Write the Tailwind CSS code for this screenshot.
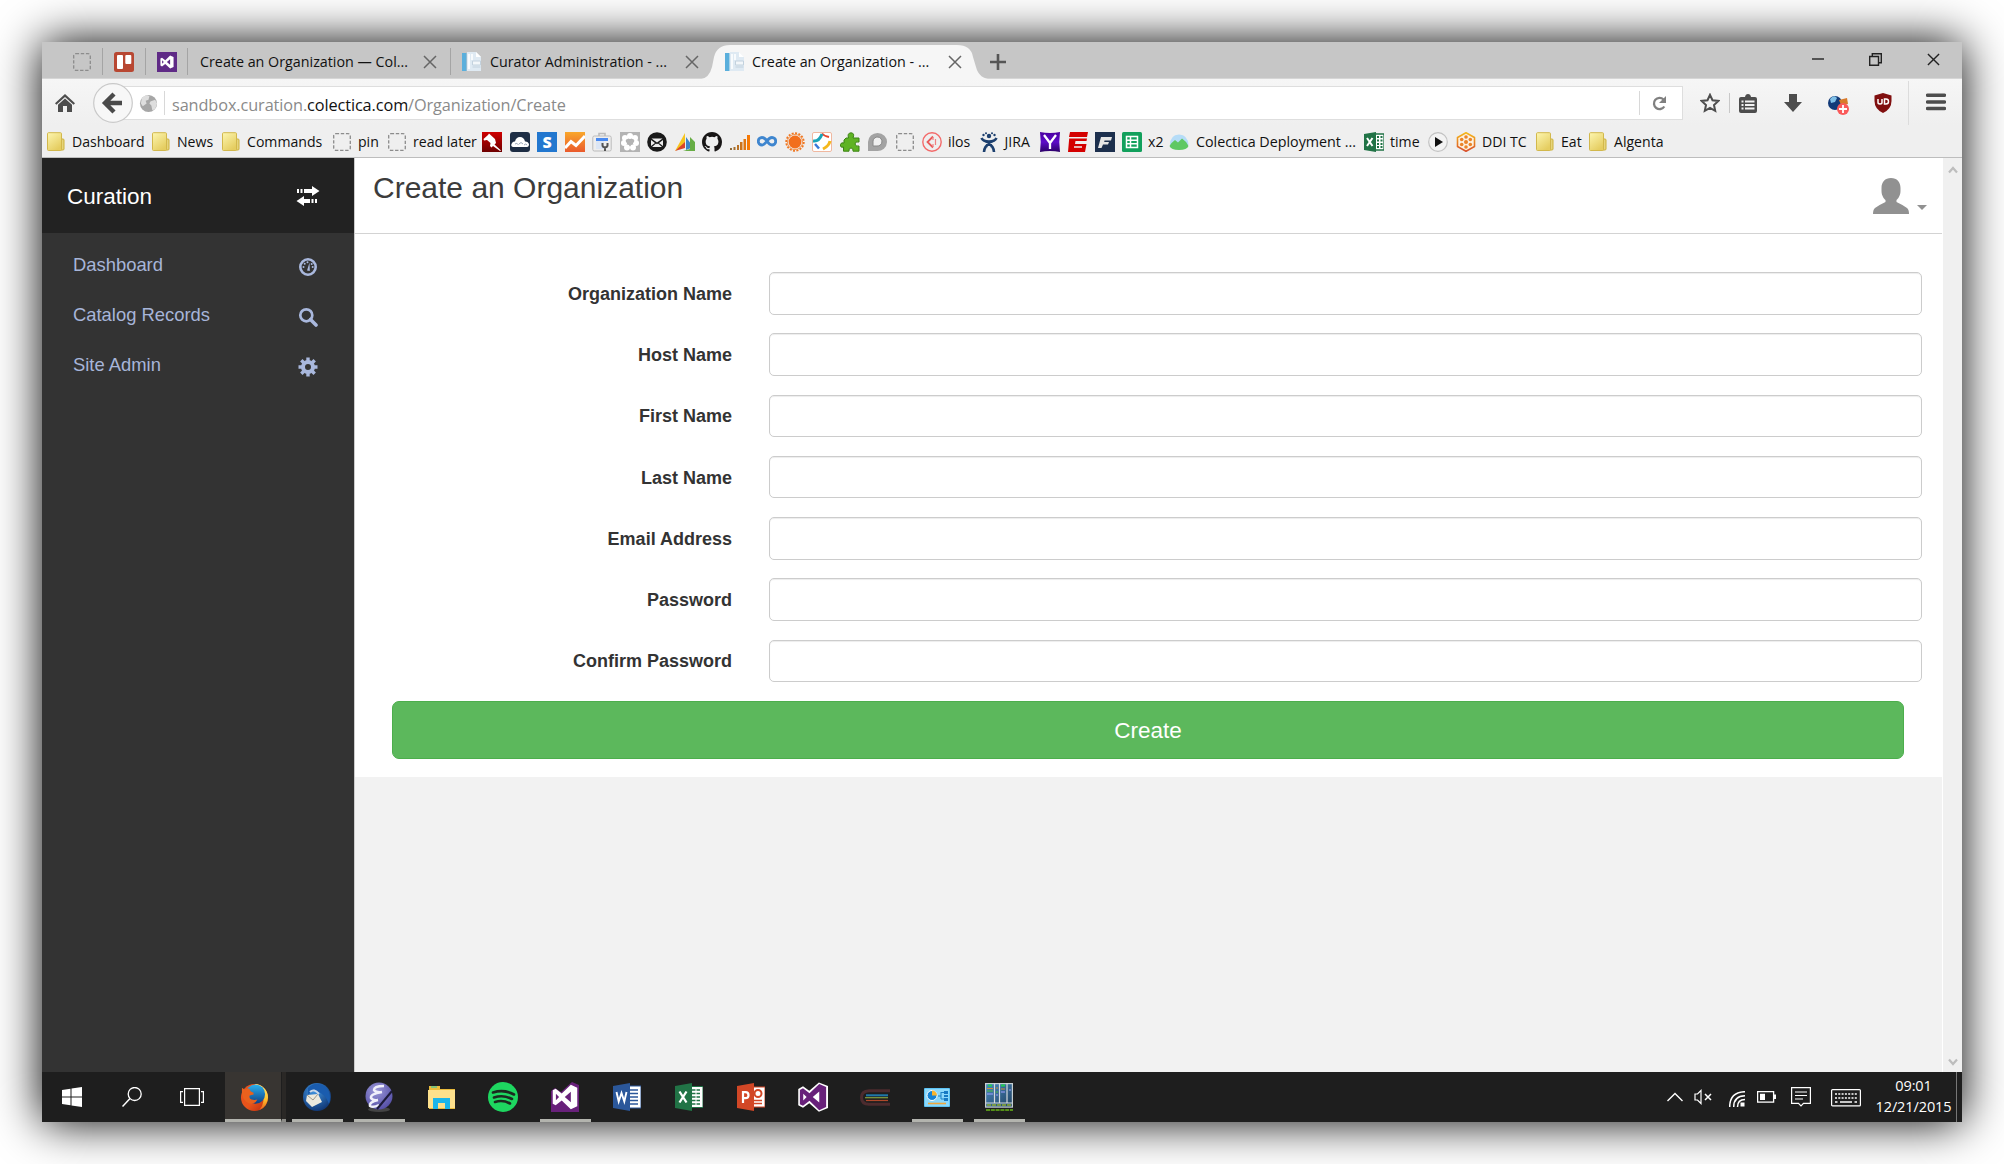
<!DOCTYPE html>
<html lang="en">
<head>
<meta charset="utf-8">
<title>Create an Organization</title>
<script src="https://cdn.jsdelivr.net/npm/@tailwindcss/browser@4"></script>
</head>
<body class="bg-white w-[2004px] h-[1164px] overflow-hidden p-[42px] font-['Open_Sans',sans-serif]">
<svg class="absolute w-0 h-0">
  <defs>
    <linearGradient id="fg" x1="0" y1="0" x2="0.6" y2="1"><stop offset="0" stop-color="#fdf6b0"/><stop offset="1" stop-color="#e5cd60"/></linearGradient>
    <linearGradient id="pinr" x1="0" y1="0" x2="0" y2="1"><stop offset="0" stop-color="#cf0000"/><stop offset="1" stop-color="#6e0000"/></linearGradient>
    <linearGradient id="ora" x1="0" y1="0" x2="0" y2="1"><stop offset="0" stop-color="#f9a72b"/><stop offset="1" stop-color="#ea5a2c"/></linearGradient>
    <linearGradient id="yah" x1="0" y1="0" x2="0" y2="1"><stop offset="0" stop-color="#4a00a0"/><stop offset=".5" stop-color="#5d0cc8"/><stop offset="1" stop-color="#2b0066"/></linearGradient>
    <linearGradient id="bars" x1="0" x2="1"><stop offset="0" stop-color="#8a6a3a"/><stop offset="1" stop-color="#ff7a00"/></linearGradient>
    <linearGradient id="hex" x1="0" y1="0" x2="0" y2="1"><stop offset="0" stop-color="#f5b81c"/><stop offset="1" stop-color="#d8502c"/></linearGradient>
    <linearGradient id="ffo" x1="0" y1="0" x2="1" y2="1"><stop offset="0" stop-color="#e8501c"/><stop offset=".55" stop-color="#e8541b"/><stop offset="1" stop-color="#b5260c"/></linearGradient>
    <linearGradient id="ffb" x1="0" y1="0" x2="0" y2="1"><stop offset="0" stop-color="#2cb2ee"/><stop offset="1" stop-color="#0c3f86"/></linearGradient>
    <linearGradient id="ffy" x1="0" y1="0" x2="0" y2="1"><stop offset="0" stop-color="#fff27a"/><stop offset=".6" stop-color="#fdc22c"/><stop offset="1" stop-color="#ea5b1a"/></linearGradient>
    <radialGradient id="tb" cx=".4" cy=".3" r=".7"><stop offset="0" stop-color="#3f93e0"/><stop offset="1" stop-color="#123a78"/></radialGradient>
    <radialGradient id="em" cx=".4" cy=".3" r=".7"><stop offset="0" stop-color="#9b98d8"/><stop offset="1" stop-color="#5751a8"/></radialGradient>
    <linearGradient id="sky" x1="0" y1="0" x2="1" y2="1"><stop offset="0" stop-color="#4a8ac0"/><stop offset="1" stop-color="#20405f"/></linearGradient>
    <symbol id="folder" viewBox="0 0 20 20"><path d="M14 7h3q1 0 1 1v9q0 1-1 1h-3z" fill="#e6d47c" stroke="#cdb23a"/><rect x="1.5" y=".7" width="14" height="17.8" rx="1" fill="url(#fg)" stroke="#d2b84c"/></symbol>
    <symbol id="dash" viewBox="0 0 20 20"><rect x="1.7" y="1.7" width="16.6" height="16.6" rx="2" fill="none" stroke="#8c8c8c" stroke-width="1.3" stroke-dasharray="3.4 1.7"/></symbol>
    <symbol id="x" viewBox="0 0 14 14"><path d="M1 1L13 13M13 1L1 13" stroke="currentColor" stroke-width="1.5" fill="none"/></symbol>
    <symbol id="doc" viewBox="0 0 20 20"><path d="M0 1h4.500v18H0z" fill="#5aafdc"/><path d="M5 0h9l5 5v14H5z" fill="#dfeaf3"/><path d="M7 2v15M10 2v6" stroke="#f8fbfd" stroke-width="2"/><path d="M10.500 9h8v4h-8zM10.500 15h8" stroke="#c3d2de" stroke-width="1" fill="#f3f7fa"/><path d="M14 0l5 5h-5z" fill="#fff"/></symbol>
    <symbol id="vs" viewBox="0 0 24 24"><path fill-rule="evenodd" d="M17 1.5L22.5 4V20L17 22.5L9.2 15L4 19L1.5 17.7V6.3L4 5L9.2 9ZM17 7.6L11.8 12L17 16.4ZM4.2 9.3V14.7L6.9 12Z"/></symbol>
    <symbol id="globe" viewBox="0 0 20 20"><circle cx="10" cy="10" r="9" fill="#a6a6a6"/><path d="M3 4q4-4 8-2l-1 4-3 1 1 3-4 3-2-3zM12 8l5-2 2 4-2 6-3 1-1-5-2-2z" fill="#dedede"/></symbol>
  </defs>
</svg>

<div class="w-[1920px] h-[1080px] flex flex-col shadow-[0_0_44px_#000] bg-[#efefef]">

  <!-- Tab strip -->
  <div class="h-[37px] shrink-0 bg-[#c6c6c6] flex items-center text-[14.300px] text-[#111] whitespace-nowrap border-b border-[#d6d6d6]">
    <div class="w-[60px] pl-[30px] shrink-0 mt-[3px]"><svg class="size-5"><use href="#dash"/></svg></div>
    <div class="w-[43px] h-[27px] mt-[3px] border-l border-[#a4a4a4] shrink-0 flex items-center pl-[11px]"><svg class="size-5" viewBox="0 0 20 20"><rect width="20" height="20" rx="2.5" fill="#b84732"/><rect x="3" y="3" width="6" height="14" rx="1" fill="#fff"/><rect x="11.3" y="3" width="6" height="9" rx="1" fill="#fff"/></svg></div>
    <div class="w-[42px] h-[27px] mt-[3px] border-l border-[#a4a4a4] shrink-0 flex items-center pl-[11px]"><svg class="size-5" viewBox="0 0 20 20"><rect width="20" height="20" fill="#5f2a86"/><use href="#vs" x="2.5" y="2.5" width="15" height="15" fill="#fff"/></svg></div>
    <div class="w-[263px] h-[27px] mt-[3px] border-l border-[#a4a4a4] shrink-0 flex items-center pl-[12px]"><span class="w-[223px]">Create an Organization — Col...</span><svg class="size-[14px] text-[#666]"><use href="#x"/></svg></div>
    <div class="w-[250px] h-[27px] mt-[3px] border-l border-[#a4a4a4] shrink-0 flex items-center pl-[11px]"><svg class="size-5 mr-[8px]"><use href="#doc"/></svg><span class="w-[195px]">Curator Administration - ...</span><svg class="size-[14px] text-[#666]"><use href="#x"/></svg></div>
    <div class="w-[292px] h-[37px] shrink-0 relative flex items-center pl-[25px] pt-[3px]">
      <svg class="absolute left-0 top-[1px] w-[292px] h-[38px]" viewBox="0 0 292 38"><path d="M-1 36.500Q9 36 12 24L14 14Q17 2 30 2H257Q271 2 273 14L276 24Q279 36 292 36.500V38H0Z" fill="#f6f6f6"/></svg>
      <svg class="size-5 mr-[7px] relative"><use href="#doc"/></svg><span class="w-[196px] relative">Create an Organization - ...</span><svg class="size-[14px] text-[#666] relative"><use href="#x"/></svg>
    </div>
    <svg class="size-4 shrink-0 -ml-[2px] mt-[3px]" viewBox="0 0 16 16"><path d="M8 0V16M0 8H16" stroke="#555" stroke-width="2.6"/></svg>
    <div class="ml-auto flex items-center pr-[22px] pb-[2px] text-[#222]">
      <svg class="w-3 h-3 mr-[45px]" viewBox="0 0 12 12"><path d="M0 6H12" stroke="#222" stroke-width="1.4"/></svg>
      <svg class="w-[13px] h-[13px] mr-[45px]" viewBox="0 0 13 13"><path d="M.7 3.5H9.5V12.3H.7ZM3.3 3.3V.7H12.3V9.7H9.7" fill="none" stroke="#222" stroke-width="1.4"/></svg>
      <svg class="size-[13px]"><use href="#x" width="13" height="13"/></svg>
    </div>
  </div>

  <!-- Navigation toolbar -->
  <div class="h-[46px] pt-[2px] shrink-0 bg-linear-to-b from-[#f6f6f6] to-[#efefef] flex items-center relative">
    <svg class="w-5 h-[18px] ml-[13px] shrink-0" viewBox="0 0 20 18"><path d="M10 0L20 9.3L18.6 10.7L10 3L1.4 10.7L0 9.3Z" fill="#4d4d4d"/><path d="M10 4.5L17 10.8V18H12V12H8V18H3V10.8Z" fill="#4d4d4d"/></svg>
    <svg class="size-[40px] ml-[18px] shrink-0 z-10 relative" viewBox="0 0 40 40"><circle cx="20" cy="20" r="19.3" fill="#f7f7f7" stroke="#c9c9c9" stroke-width="1.2"/><path d="M21 11L12 20L21 29M13 20H29" fill="none" stroke="#4a4a4a" stroke-width="4.4"/></svg>
    <div class="-ml-[14px] w-[1564px] h-[34px] shrink-0 bg-white border border-[#dedede] flex items-center">
      <svg class="size-[19px] ml-[19px] mr-[6px] shrink-0"><use href="#globe"/></svg>
      <div class="w-px h-6 bg-[#d8d8d8] mr-[7px]"></div>
      <span class="text-[16.300px] text-[#8a8a8a] tracking-[-0.1px] mt-[4px] whitespace-nowrap">sandbox.curation.<span class="text-[#111]">colectica.com</span>/Organization/Create</span>
      <div class="w-px h-6 bg-[#d8d8d8] ml-auto mr-[12px]"></div>
      <svg class="size-[15px] mr-[15px]" viewBox="0 0 15 15"><path d="M12.3 10.5A5.6 5.6 0 1 1 11.5 3.5" fill="none" stroke="#808080" stroke-width="2.3"/><path d="M14 0V7H7Z" fill="#808080"/></svg>
    </div>
    <svg class="w-5 h-5 ml-[17px] shrink-0" viewBox="0 0 20 20"><path d="M10 1.8L12.5 7.2L18.3 7.9L14 12L15.2 17.8L10 14.9L4.8 17.8L6 12L1.7 7.9L7.5 7.2Z" fill="none" stroke="#4d4d4d" stroke-width="2"/></svg>
    <div class="w-px h-5 bg-[#c8c8c8] ml-[9px] mr-[9px]"></div>
    <svg class="w-[18px] h-[19px] shrink-0" viewBox="0 0 18 19"><path d="M2 3H6Q6.500 0 9 0Q11.500 0 12 3H16Q18 3 18 5V17Q18 19 16 19H2Q0 19 0 17V5Q0 3 2 3Z" fill="#4d4d4d"/><path d="M2.500 6.500H4.500V8.500H2.500ZM6 6.500H15.500V8.500H6ZM2.500 10H4.500V12H2.500ZM6 10H15.500V12H6ZM2.500 13.500H4.500V15.500H2.500ZM6 13.500H15.500V15.500H6Z" fill="#f2f2f2"/></svg>
    <svg class="w-[18px] h-[18px] ml-[27px] shrink-0" viewBox="0 0 18 18"><path d="M5 0H13V8H18L9 18L0 8H5Z" fill="#4d4d4d"/></svg>
    <svg class="w-[21px] h-[20px] ml-[26px] mt-[3px] shrink-0" viewBox="0 0 21 20"><circle cx="7" cy="8" r="7" fill="#123a78"/><path d="M2 4Q6-1 9 3L7 7L3 8Z" fill="#7fc0e8"/><path d="M11 5L19 3L20 9L13 10Z" fill="#d87a2a"/><circle cx="15" cy="14" r="6" fill="#fa5a5a"/><path d="M15 10V18M11 14H19" stroke="#fff" stroke-width="1.800"/></svg>
    <svg class="w-[18px] h-[20px] ml-[25px] shrink-0" viewBox="0 0 18 20"><path d="M9 0L17.500 2.500V8Q17.500 16 9 20Q.5 16 .5 8V2.500Z" fill="#800f0f"/><path d="M4 6V9.500Q4 11 6 11Q8 11 8 9.500V6M10.500 6V11H12Q14.500 11 14.500 8.500Q14.500 6 12 6Z" fill="none" stroke="#fff" stroke-width="1.500"/></svg>
    <div class="w-px h-[44px] bg-[#dcdcdc] ml-[16px] mr-[17px]"></div>
    <svg class="w-5 h-[18px] -mt-[2px] shrink-0" viewBox="0 0 20 18"><path d="M1.500 2.200H18.500M1.500 9H18.500M1.500 15.500H18.500" stroke="#4d4d4d" stroke-width="3.400" stroke-linecap="round"/></svg>
  </div>

  <!-- Bookmarks toolbar -->
  <div class="h-[33px] shrink-0 bg-[#efefef] border-b border-[#bdbdbd] flex items-center pl-[4px] pt-[2px] text-[14.100px] text-[#111] whitespace-nowrap [&>div]:flex [&>div]:items-center [&>div]:gap-[6px] [&>div]:shrink-0 [&_svg]:size-5 [&_svg]:shrink-0">
    <div class="w-[105px]"><svg><use href="#folder"/></svg>Dashboard</div>
    <div class="w-[70px]"><svg><use href="#folder"/></svg>News</div>
    <div class="w-[111px]"><svg><use href="#folder"/></svg>Commands</div>
    <div class="w-[55px]"><svg><use href="#dash"/></svg>pin</div>
    <div class="w-[95px]"><svg><use href="#dash"/></svg>read later</div>
    <div class="w-[27.500px]"><svg viewBox="0 0 20 20"><rect width="20" height="20" fill="url(#pinr)"/><path d="M7 1.500L13 7L14 11L12.500 12.500L19 18.500L18 19L11 14L9.500 15.500L8 14L8.500 11L5 8L2 8.500L1.500 7L6 3Z" fill="#fff"/></svg></div>
    <div class="w-[27.500px]"><svg viewBox="0 0 20 20"><rect width="20" height="20" rx="3" fill="#1d2d44"/><path d="M3 15Q0 14 2 11Q3 9 5 9.500Q6 5 10 5Q14 5 15 9.500Q18 9 19 12Q19 15 17 15Z" fill="#fff"/><path d="M5 12q2-2 3.500 1M9 12q2-3 4 0M14 13q2-2 3 0" stroke="#9aa6b8" fill="none"/></svg></div>
    <div class="w-[27.500px]"><svg viewBox="0 0 20 20"><rect width="20" height="20" fill="#2277cf"/><text x="10" y="15.500" text-anchor="middle" font-family="Open Sans" font-weight="800" font-size="16" fill="#fff">S</text></svg></div>
    <div class="w-[27.500px]"><svg viewBox="0 0 20 20"><rect width="20" height="20" fill="url(#ora)"/><path d="M0 16L6 9.500L11 13.500L20 4" fill="none" stroke="#fff" stroke-width="3"/></svg></div>
    <div class="w-[27.500px]"><svg viewBox="0 0 20 20"><path d="M7 4V1.500H13V4" fill="none" stroke="#bbb" stroke-width="1.500"/><rect x=".8" y="4" width="18.400" height="15" rx="1.500" fill="#eee" stroke="#bbb"/><rect x="4" y="6" width="12" height="3" fill="#4a8af0"/><rect x="4" y="9" width="8" height="8" fill="#dce6f5"/><path d="M10.500 11V13.500Q10.500 15 13 15.500V19M15.500 11V13.500Q15.500 15 13 15.500" stroke="#555" stroke-width="2" fill="none"/></svg></div>
    <div class="w-[27.500px]"><svg viewBox="0 0 20 20"><rect width="20" height="20" fill="#b3b3b3"/><g fill="#fff"><circle cx="10" cy="4" r="3"/><circle cx="15" cy="6" r="3"/><circle cx="16" cy="11" r="3"/><circle cx="13" cy="15.500" r="3"/><circle cx="7" cy="15.500" r="3"/><circle cx="4" cy="11" r="3"/><circle cx="5" cy="6" r="3"/></g><path d="M10 14L6 10Q5 7 8 7L10 8.500L12 7Q15 7 14 10Z" fill="#b3b3b3"/></svg></div>
    <div class="w-[27.500px]"><svg viewBox="0 0 20 20"><circle cx="10" cy="10" r="9.800" fill="#1a1a1a"/><path d="M4.500 6.500H15.500L10 10.500ZM4 8L8 11L4 14ZM16 8L12 11L16 14ZM5 15L9 11.500L10 12.300L11 11.500L15 15Z" fill="#eee"/></svg></div>
    <div class="w-[27.500px]"><svg viewBox="0 0 20 20"><path d="M0 19L10 1V13Z" fill="#f7c51e"/><path d="M0 19L10 10V16Z" fill="#d9452c"/><path d="M11 18V5L16 12V16Z" fill="#3d86c6"/><path d="M15 17V5L20 10V19H8Z" fill="#67ad45"/></svg></div>
    <div class="w-[27.500px]"><svg viewBox="0 0 16 16"><path fill="#181616" d="M8 0C3.580 0 0 3.580 0 8c0 3.540 2.290 6.530 5.470 7.590.4.070.550-.170.550-.380 0-.190-.010-.820-.010-1.490-2.010.370-2.530-.490-2.690-.940-.090-.230-.480-.940-.820-1.130-.280-.150-.680-.520-.010-.530.630-.010 1.080.580 1.230.820.720 1.210 1.870.870 2.330.660.070-.520.280-.870.510-1.070-1.780-.200-3.640-.890-3.640-3.950 0-.870.310-1.590.820-2.150-.080-.200-.360-1.020.080-2.120 0 0 .670-.210 2.200.820a7.600 7.600 0 0 1 4 0c1.530-1.040 2.200-.820 2.200-.820.440 1.100.160 1.920.080 2.120.510.560.820 1.270.820 2.150 0 3.070-1.870 3.750-3.650 3.950.290.250.540.730.540 1.480 0 1.070-.010 1.930-.010 2.200 0 .210.150.460.550.380A8.010 8.010 0 0 0 16 8c0-4.420-3.580-8-8-8z"/></svg></div>
    <div class="w-[27.500px]"><svg viewBox="0 0 20 20"><path d="M0 16h2v2H0zM3.500 15h2v3h-2zM7 13h2v5H7zM10 10h2.500v8H10zM13.500 7H16v11h-2.500zM17 3h3v15h-3z" fill="url(#bars)"/></svg></div>
    <div class="w-[27.500px]"><svg viewBox="0 0 20 20"><path d="M10 9Q7.500 5.500 5 5.500A3.700 3.700 0 0 0 5 13Q7 13 10 9Q12.500 5.500 15 5.500A3.700 3.700 0 0 1 15 13Q12.500 13 10 9Z" fill="none" stroke="#3f86cf" stroke-width="2.800"/></svg></div>
    <div class="w-[27.500px]"><svg viewBox="0 0 20 20"><circle cx="10" cy="10" r="8.700" fill="none" stroke="#ef7722" stroke-width="2" stroke-dasharray="2 1.400"/><circle cx="10" cy="10" r="7.600" fill="none" stroke="#f39a58"/><circle cx="10" cy="10" r="6.400" fill="#f26f1d"/></svg></div>
    <div class="w-[27.500px]"><svg viewBox="0 0 20 20"><rect x=".5" y=".5" width="19" height="19" rx="1.500" fill="#fff" stroke="#f0b8a0"/><path d="M10 1.500Q12 4 17 5" stroke="#e8452c" stroke-width="2" fill="none"/><path d="M1 9Q7 10 10 2" stroke="#1aa4b8" stroke-width="3" fill="none"/><path d="M18 9Q17 14 11 17" stroke="#f5b81c" stroke-width="3" fill="none"/><path d="M3 12L7 16.500" stroke="#3878d8" stroke-width="2.500"/></svg></div>
    <div class="w-[27.500px]"><svg viewBox="0 0 20 20"><path d="M6 6H8.500Q7 1 11 .8Q15 1 13 6H19V10Q15 9 15 12Q15.500 15 19 14V19.200H13Q13.500 16 11 16Q8.500 16 9 19.200H3.500V15Q0 16 .5 12.500Q1 10 4 11V8Z" fill="#5fb324" stroke="#3c8414"/></svg></div>
    <div class="w-[27.500px]"><svg viewBox="0 0 20 20"><path d="M1 19V10A9.500 9 0 1 1 10 19Z" fill="#a3a3a3"/><path d="M6 14V9A4.500 4.500 0 1 1 10 14Z" fill="#efefef" stroke="#888"/></svg></div>
    <div class="w-[27.500px]"><svg><use href="#dash"/></svg></div>
    <div class="w-[56.500px]"><svg viewBox="0 0 20 20"><circle cx="10" cy="10" r="9.200" fill="none" stroke="#f36a6a" stroke-width="1.400"/><path d="M11 4.500L5.500 10L11 15.500" fill="none" stroke="#e85a5a" stroke-width="1.800"/><path d="M11 5V8M11 12V15M13.500 7V13" fill="none" stroke="#f08080" stroke-width="1.200"/></svg>ilos</div>
    <div class="w-[61.500px]"><svg viewBox="0 0 20 20"><g fill="#1c3f6e"><circle cx="10" cy="4" r="2.200"/><circle cx="4.500" cy="3" r="1.200"/><circle cx="15.500" cy="3" r="1.200"/><circle cx="7" cy="1.300" r="1"/><circle cx="13" cy="1.300" r="1"/></g><path d="M2.500 6Q4 9.500 10 9.500Q16 9.500 17.500 6M5 20Q5.500 14 10 12Q14.500 14 15 20M5.500 9Q11 10 13 15M14.500 9Q9 10 7 15" fill="none" stroke="#1c3f6e" stroke-width="2.600"/></svg>JIRA</div>
    <div class="w-[27.500px]"><svg viewBox="0 0 20 20"><path d="M0 0Q10 2 20 0Q18.500 10 20 20Q10 18 0 20Q1.500 10 0 0Z" fill="url(#yah)"/><path d="M4 3L10 11L16 3M10 11V17" stroke="#fff" stroke-width="2.300" fill="none"/></svg></div>
    <div class="w-[27.500px]"><svg viewBox="0 0 20 20"><path d="M2 0H20L19 5H1ZM1.200 6.500H19L18.500 9H7.500L7 12H18.500L17 20H0Z" fill="#d40000"/><path d="M6 15H14" stroke="#efefef" stroke-width="1.500"/></svg></div>
    <div class="w-[27px]"><svg viewBox="0 0 20 20"><rect width="20" height="20" fill="#1c2f4d"/><path d="M6 5H17L16 8.500H9.500L9.200 10H14L13 12.500H8L6.500 16H3Z" fill="#e6e6e6"/></svg></div>
    <div class="w-[47px]"><svg viewBox="0 0 20 20"><rect width="20" height="20" rx="1.500" fill="#12a05c"/><path d="M4.500 4.500H15.500V15.500H4.500ZM4.500 8.200H15.500M4.500 11.800H15.500M8.500 4.500V15.500" fill="none" stroke="#fff" stroke-width="1.500"/></svg>x2</div>
    <div class="w-[195px]"><svg viewBox="0 0 20 20"><path d="M1 13Q1 3 10 2.500Q19 3 19.500 13Z" fill="#b5dcf7"/><path d="M.5 14Q3 10 6 8L9 10.500L13 6.500Q17 9 19.500 14Q18 18 10 18Q2 18 .5 14Z" fill="#5fc863"/></svg><span class="text-[14.300px] ml-px">Colectica Deployment ...</span></div>
    <div class="w-[64px]"><svg viewBox="0 0 20 20"><path d="M11 2H20V18H11Z" fill="#fff" stroke="#217346" stroke-width="1.300"/><path d="M13 5h2M16.500 5h2M13 8.500h2M16.500 8.500h2M13 12h2M16.500 12h2M13 15h2M16.500 15h2" stroke="#217346" stroke-width="2"/><path d="M0 2L12 0V20L0 18Z" fill="#217346"/><path d="M3 6L8.500 14M8.500 6L3 14" stroke="#fff" stroke-width="2"/></svg>time</div>
    <div class="w-[28px]"><svg viewBox="0 0 20 20"><circle cx="10" cy="10" r="9.300" fill="#f3f3f3" stroke="#c2c2c2" stroke-width="1.200"/><path d="M7 5V15L15 10Z" fill="#111"/></svg></div>
    <div class="w-[79px]"><svg viewBox="0 0 20 20"><path d="M10 .8L18.500 5.500V14.500L10 19.200L1.500 14.500V5.500Z" fill="#fdf1e0" stroke="url(#hex)" stroke-width="1.600" stroke-linejoin="round"/><g fill="#ea8428"><circle cx="10" cy="10" r="2"/><circle cx="10" cy="5" r="1.800"/><circle cx="10" cy="15" r="1.800"/><circle cx="5.700" cy="7.500" r="1.800"/><circle cx="14.300" cy="7.500" r="1.800"/><circle cx="5.700" cy="12.500" r="1.800"/><circle cx="14.300" cy="12.500" r="1.800"/></g></svg>DDI TC</div>
    <div class="w-[53px]"><svg><use href="#folder"/></svg>Eat</div>
    <div><svg><use href="#folder"/></svg>Algenta</div>
  </div>

  <!-- Page -->
  <div class="h-[914px] shrink-0 flex font-['Liberation_Sans',Arial,sans-serif]">
    <aside class="w-[312px] shrink-0 bg-[#333] text-[#a7b5d9] text-[18.400px]">
      <div class="h-[75px] bg-[#222] flex items-center justify-between pl-[25px] pr-[34px] text-[22.500px] text-white">
        <span class="mt-[3px]">Curation</span>
        <svg class="w-6 h-5" viewBox="0 0 24 20"><path d="M16 0L23.500 5L16 10V7H8V3H16ZM1 3h2v4H1zM4.500 3h2v4h-2zM8 10L.5 15L8 20V17H14V13H8ZM15.500 13h2v4h-2zM19 13h2v4h-2z" fill="#fff"/></svg>
      </div>
      <nav class="pt-[7px] pl-[31px] pr-[36px] flex flex-col">
        <div class="h-[50px] flex items-center justify-between"><span>Dashboard</span><svg class="size-5 mt-[3px]" viewBox="0 0 20 20"><circle cx="10" cy="10" r="7.700" fill="none" stroke="#a9b8dd" stroke-width="2.600"/><path d="M9 13.500L11.500 5.500L11.800 14Z" fill="#a9b8dd"/><g fill="#a9b8dd"><circle cx="5.500" cy="10" r="1"/><circle cx="6.700" cy="6.800" r="1"/><circle cx="9.500" cy="5.300" r="1"/><circle cx="13.700" cy="7" r="1"/><circle cx="14.700" cy="10" r="1"/></g></svg></div>
        <div class="h-[50px] flex items-center justify-between"><span>Catalog Records</span><svg class="size-5 mt-[3px]" viewBox="0 0 20 20"><circle cx="8.300" cy="8.300" r="6" fill="none" stroke="#a9b8dd" stroke-width="2.700"/><path d="M12.500 12.500L18 18" stroke="#a9b8dd" stroke-width="3.600" stroke-linecap="round"/></svg></div>
        <div class="h-[50px] flex items-center justify-between"><span>Site Admin</span><svg class="size-5 mt-[3px]" viewBox="0 0 20 20"><circle cx="10" cy="10" r="5" fill="none" stroke="#a9b8dd" stroke-width="4"/><path d="M10 .5V4M10 16V19.500M.5 10H4M16 10H19.500M3.300 3.300L5.800 5.800M14.200 14.200L16.700 16.700M3.300 16.700L5.800 14.200M14.200 5.800L16.700 3.300" stroke="#a9b8dd" stroke-width="3.400"/></svg></div>
      </nav>
    </aside>

    <main class="w-[1588px] shrink-0 bg-[#f2f2f2] border-l border-[#ccc]">
      <div class="bg-white h-[619px]">
        <header class="h-[76px] border-b border-[#d3d3d3] flex justify-between pl-[18px] pr-[15px]">
          <h1 class="text-[30px] leading-[34px] mt-[13px] text-[#3c3c3c]">Create an Organization</h1>
          <div class="flex items-end gap-[8px] h-[56px]">
            <svg class="w-[36px] h-[36px]" viewBox="0 0 36 36"><path d="M18 0C24 0 27.500 4 27.500 10V13C27.500 17.500 25 21 23.500 22V24Q30 27 34 30Q36 31.500 36 36H0Q0 31.500 2 30Q6 27 12.500 24V22C11 21 8.500 17.500 8.500 13V10C8.500 4 12 0 18 0Z" fill="#919191"/></svg>
            <svg class="w-[10px] h-[5px] mb-[4px]" viewBox="0 0 10 5"><path d="M0 0H10L5 5Z" fill="#919191"/></svg>
          </div>
        </header>
        <form class="pt-[38px] text-[18px] font-bold text-[#333]">
          <div class="flex flex-col gap-[18.750px] [&>label]:flex [&>label]:items-center [&>label]:h-[42.500px] [&_span]:w-[377px] [&_span]:text-right [&_span]:mr-[37px] [&_span]:mt-[2px] [&_span]:shrink-0 [&_input]:w-[1153px] [&_input]:h-full [&_input]:shrink-0 [&_input]:rounded-[5px] [&_input]:border [&_input]:border-[#ccc] [&_input]:bg-white [&_input]:shadow-[inset_0_1px_1px_rgba(0,0,0,0.075)]">
            <label><span>Organization Name</span><input type="text"></label>
            <label><span>Host Name</span><input type="text"></label>
            <label><span>First Name</span><input type="text"></label>
            <label><span>Last Name</span><input type="text"></label>
            <label><span>Email Address</span><input type="text"></label>
            <label><span>Password</span><input type="password"></label>
            <label><span>Confirm Password</span><input type="password"></label>
          </div>
          <button type="button" class="mt-[18.500px] ml-[37px] w-[1512px] h-[58px] rounded-[7px] bg-[#5cb85c] border border-[#4cae4c] text-white font-normal text-[22.500px] pt-[2px]">Create</button>
        </form>
      </div>
    </main>

    <div class="w-[20px] shrink-0 bg-[#f0f0f0] border-l border-white flex flex-col justify-between items-center pt-[8px] pb-[6px]">
      <svg class="w-[10px] h-[8px]" viewBox="0 0 10 8"><path d="M1 6.500L5 2L9 6.500" fill="none" stroke="#bdbdbd" stroke-width="2.200"/></svg>
      <svg class="w-[10px] h-[8px]" viewBox="0 0 10 8"><path d="M1 1.500L5 6L9 1.500" fill="none" stroke="#bdbdbd" stroke-width="2.200"/></svg>
    </div>
  </div>

  <!-- Taskbar -->
  <div class="h-[50px] shrink-0 bg-[#1e1e1e] flex">
    <div class="w-[60px] shrink-0 flex items-center justify-center"><svg class="size-5" viewBox="0 0 20 20"><path d="M0 3L8.500 1.700V9.500H0ZM9.500 1.500L20 0V9.500H9.500ZM0 10.500H8.500V18.300L0 17ZM9.500 10.500H20V20L9.500 18.500Z" fill="#fff"/></svg></div>
    <div class="w-[60px] shrink-0 flex items-center justify-center"><svg class="size-5" viewBox="0 0 20 20"><circle cx="12.700" cy="7" r="6.500" fill="none" stroke="#fff" stroke-width="1.300"/><path d="M8 11.500L.5 19.500" stroke="#fff" stroke-width="1.500"/></svg></div>
    <div class="w-[62px] shrink-0 flex items-center justify-center pr-[2px]"><svg class="w-6 h-[18px]" viewBox="0 0 24 18"><path d="M4.600 .6H19.400V17.400H4.600ZM3 3.600H.6V14.400H3M21 3.600H23.400V14.400H21" fill="none" stroke="#fff" stroke-width="1.200"/></svg></div>
    <div class="w-[62px] shrink-0 flex">
      <div class="w-[57px] bg-[#383532] border-b-[3px] border-[#b3b4ae] flex items-center justify-center pt-[3px] pl-[2px] ml-px"><svg class="size-[29px]" viewBox="0 0 30 30"><circle cx="15" cy="15" r="14" fill="url(#ffo)"/><path d="M15 1A14 14 0 0 1 29 15A14 14 0 0 1 20 28Q27 20 23 8Z" fill="url(#ffy)"/><circle cx="16" cy="11.500" r="10" fill="url(#ffb)"/><path d="M2 5L5 7Q7 5 10 6Q10 9 14 10L14 12L10 13Q9 16 12 17Q15 18 18 17Q15 23 9 21Q4 19 2 12Z" fill="#e9611d"/></svg></div>
      <div class="w-[5px] bg-[#2a2826] border-b-[3px] border-b-[#8d8d89] border-l border-l-[#1e1e1e]"></div>
    </div>
    <div class="w-[62px] shrink-0 flex flex-col items-center"><div class="h-[47px] flex items-center pt-[3px]"><svg class="size-[30px]" viewBox="0 0 30 30"><circle cx="15" cy="15" r="14" fill="url(#tb)"/><path d="M6 6Q14-2 24 5Q30 12 27 22Q24 12 14 9Q8 9 6 14Z" fill="#1a5cae"/><path d="M5 13L16 12L20 20L10 25L4 19Z" fill="#eceade"/><path d="M5 13L11 18L16 12" fill="none" stroke="#9d978a"/><path d="M8 10Q12 6 17 12" stroke="#c9d9ea" stroke-width="2" fill="none"/></svg></div><div class="w-[51px] h-[3px] bg-[#b3b4ae]"></div></div>
    <div class="w-[62px] shrink-0 flex flex-col items-center"><div class="h-[47px] flex items-center pt-[3px]"><svg class="size-[30px]" viewBox="0 0 30 30"><ellipse cx="15" cy="27.500" rx="11" ry="2.500" fill="#444"/><circle cx="15" cy="14" r="13.500" fill="url(#em)"/><path d="M20 4Q10 4 10 8Q12 11 18 10Q6 12 7 16Q9 19 14 18Q5 20 6 24Q9 26 15 23" fill="none" stroke="#f0f0fb" stroke-width="2.500"/><path d="M28 9L13 27" stroke="#1d1b3a" stroke-width="2"/></svg></div><div class="w-[51px] h-[3px] bg-[#b3b4ae]"></div></div>
    <div class="w-[62px] shrink-0 flex items-center justify-center"><svg class="w-[27px] h-[24px]" viewBox="0 0 27 24"><path d="M1 1H12V4H27V24H1Z" fill="#e9bb3c"/><path d="M0 5H27V23H0Z" fill="#fde08c"/><path d="M3 2H9" stroke="#5fc48e" stroke-width="1.500"/><path d="M5 13H22V24H17V18H10V24H5Z" fill="#1bb5ea"/></svg></div>
    <div class="w-[62px] shrink-0 flex items-center justify-center"><svg class="size-[30px]" viewBox="0 0 30 30"><circle cx="15" cy="15" r="15" fill="#1ed760"/><path d="M5 10.500Q16 7 26 12.500M6 15.500Q15.500 12.500 24 17M7 20Q15 17.500 22 21.500" fill="none" stroke="#1c2a20" stroke-width="2.600" stroke-linecap="round"/></svg></div>
    <div class="w-[62px] shrink-0 flex flex-col items-center"><div class="h-[47px] flex items-center pt-[3px]"><svg class="size-[30px]" viewBox="0 0 30 30"><path d="M1 9L5 6L11 10L22 0L29 3V30H1Z" fill="#68217a"/><use href="#vs" x="1" y="1" width="28" height="28" fill="#fff"/></svg></div><div class="w-[51px] h-[3px] bg-[#b3b4ae]"></div></div>
    <div class="w-[62px] shrink-0 flex items-center justify-center"><svg class="w-7 h-7" viewBox="0 0 28 28"><path d="M15 3H28V25H15Z" fill="#fff" stroke="#2b579a"/><path d="M17 7H25M17 10.500H25M17 14H25M17 17.500H25M17 21H25" stroke="#2b579a" stroke-width="1.300"/><path d="M0 3L17 0V28L0 25Z" fill="#2b579a"/><path d="M3.500 9L5.700 18.500L8.500 10L11.300 18.500L13.500 9" fill="none" stroke="#fff" stroke-width="1.900"/></svg></div>
    <div class="w-[62px] shrink-0 flex items-center justify-center"><svg class="w-7 h-7" viewBox="0 0 28 28"><path d="M15 3.500H28V24.500H15Z" fill="#fff" stroke="#217346"/><path d="M17 7H25M17 10.500H25M17 14H25M17 17.500H25M17 21H25" stroke="#217346" stroke-width="1.700"/><path d="M21 5V23" stroke="#fff"/><path d="M0 3L17 0V28L0 25Z" fill="#217346"/><path d="M4.500 8.500L11.500 19.500M11.500 8.500L4.500 19.500" stroke="#fff" stroke-width="2.300"/></svg></div>
    <div class="w-[62px] shrink-0 flex items-center justify-center"><svg class="w-7 h-7" viewBox="0 0 28 28"><path d="M15 4H28V24H15Z" fill="#fff" stroke="#d24726"/><circle cx="21" cy="10.500" r="3.500" fill="none" stroke="#d24726" stroke-width="2"/><path d="M17 17.500H25M17 20.500H25" stroke="#d24726" stroke-width="1.400"/><path d="M0 3L17 0V28L0 25Z" fill="#d24726"/><path d="M6 20V9.200H8.500Q11.500 9.200 11.500 12.200Q11.500 15.200 8.500 15.200H6" fill="none" stroke="#fff" stroke-width="2.200"/></svg></div>
    <div class="w-[62px] shrink-0 flex items-center justify-center"><svg class="size-[30px] overflow-visible" viewBox="0 0 24 24"><path d="M16.700 .3L24 3.200V20.800L16.700 23.700L9 17L4 20.600L.2 18.500V5.500L4 3.400L9 7Z" fill="#fff"/><use href="#vs" x="0" y="0" width="24" height="24" fill="#68217a"/></svg></div>
    <div class="w-[62px] shrink-0 flex items-center justify-center"><svg class="w-[30px] h-[17px]" viewBox="0 0 30 17"><path d="M30 1.700H9Q1.500 2 1.500 8.500Q1.500 15 9 15.300H30" fill="none" stroke="#4c2b2e" stroke-width="3"/><path d="M6 6.300H28" stroke="#1f77a8" stroke-width="2"/><path d="M5 8.700H28" stroke="#86a03c" stroke-width="1.200"/><path d="M6 11.500H28" stroke="#b0482a" stroke-width="1.200"/></svg></div>
    <div class="w-[62px] shrink-0 flex flex-col items-center"><div class="h-[47px] flex items-center pt-[3px]"><svg class="w-[26px] h-[19px]" viewBox="0 0 26 19"><rect width="26" height="19" rx="1" fill="#5cc3f5"/><rect x="1" y="1" width="24" height="17" fill="#8bd8fb"/><circle cx="8" cy="7.500" r="5" fill="#1583d6" stroke="#fff"/><path d="M8 7.500V2.500A5 5 0 0 1 13 7.500Z" fill="#f9b42d"/><path d="M14 8H17M17 4V11M17 4.500H20M17 11H20" stroke="#1d7fc4" fill="none"/><path d="M20 3h4v3h-4zM20 7h4v2h-4zM20 10h4v3h-4z" fill="#1679c4"/><path d="M4 15.500H22" stroke="#f0a63a" stroke-width="1.600"/></svg></div><div class="w-[51px] h-[3px] bg-[#b3b4ae]"></div></div>
    <div class="w-[62px] shrink-0 flex flex-col items-center"><div class="h-[47px] flex items-center pt-[3px]"><svg class="size-[28px]" viewBox="0 0 28 28"><rect x=".6" y=".6" width="26.800" height="23.500" fill="url(#sky)" stroke="#c8d0d2" stroke-width="1.200"/><path d="M9.500 0V20M14.500 0V20M22 0V20M1 20H27" stroke="#d4dadc" stroke-width="1.200"/><path d="M3 2.500H7M16 2.500H20" stroke="#20d050" stroke-width="2"/><path d="M2 5.500H8M11 5H13M16 6H20" stroke="#d09038"/><path d="M2 8H8M11 9H13" stroke="#50c040"/><path d="M2 11H8M11 12H13M24 7H26M16 9H20" stroke="#a0a0ff"/><path d="M2 22H26" stroke="#8fae30" stroke-width="1.500" stroke-dasharray="4 1"/><path d="M1 27H28" stroke="#559018" stroke-width="2" stroke-dasharray="4 .8"/></svg></div><div class="w-[51px] h-[3px] bg-[#b3b4ae]"></div></div>

    <div class="ml-auto flex items-center text-white">
      <svg class="w-[16px] h-[10px] mr-[11px]" viewBox="0 0 16 10"><path d="M.5 9L8 1.500L15.500 9" fill="none" stroke="#fff" stroke-width="1.400"/></svg>
      <svg class="w-[18px] h-[16px] mr-[17px]" viewBox="0 0 18 16"><path d="M1 5H3.500L7 1.500V14.500L3.500 11H1Z" fill="none" stroke="#fff" stroke-width="1.200"/><path d="M11 5L17 11M17 5L11 11" stroke="#fff" stroke-width="1.500"/></svg>
      <svg class="w-[16px] h-[16px] mr-[12px] mt-[3px]" viewBox="0 0 16 16"><path d="M.7 16Q.7 1 16 .7M4.700 16Q4.700 5 16 4.700M8.500 16Q8.500 8.500 16 8.500" fill="none" stroke="#fff" stroke-width="1.500"/><rect x="11.500" y="11.500" width="4" height="4" fill="#fff"/></svg>
      <svg class="w-[19px] h-[12px] mr-[15px]" viewBox="0 0 19 12"><rect x=".6" y=".6" width="16" height="10.500" fill="none" stroke="#fff" stroke-width="1.300"/><path d="M3 2.800H8V9H3ZM17 3.500H19V8H17Z" fill="#fff"/></svg>
      <svg class="w-[20px] h-[20px] mr-[20px]" viewBox="0 0 20 20"><path d="M.6 .6H19.400V16.400H12.500L10 19L7.500 16.400H.6ZM4 5H16M4 8.500H16M4 12H12" fill="none" stroke="#fff" stroke-width="1.200"/></svg>
      <svg class="w-[30px] h-[18px] mr-[14px] mt-[2px]" viewBox="0 0 30 18"><rect x=".6" y=".6" width="28.800" height="16.300" rx="1" fill="none" stroke="#fff" stroke-width="1.200"/><path d="M4 5H26M4 9H26" stroke="#fff" stroke-width="1.300" stroke-dasharray="2 1.300"/><path d="M4 13H6.500M9 13H21M23.500 13H26" stroke="#fff" stroke-width="1.300"/></svg>
      <div class="w-[77px] mr-[4px] text-center text-[14.500px] leading-[21.500px] -mt-[2px] whitespace-nowrap tracking-[-0.100px]">09:01<br>12/21/2015</div>
      <div class="w-px h-[50px] bg-[#777] mr-[5px]"></div>
    </div>
  </div>
</div>
</body>
</html>
